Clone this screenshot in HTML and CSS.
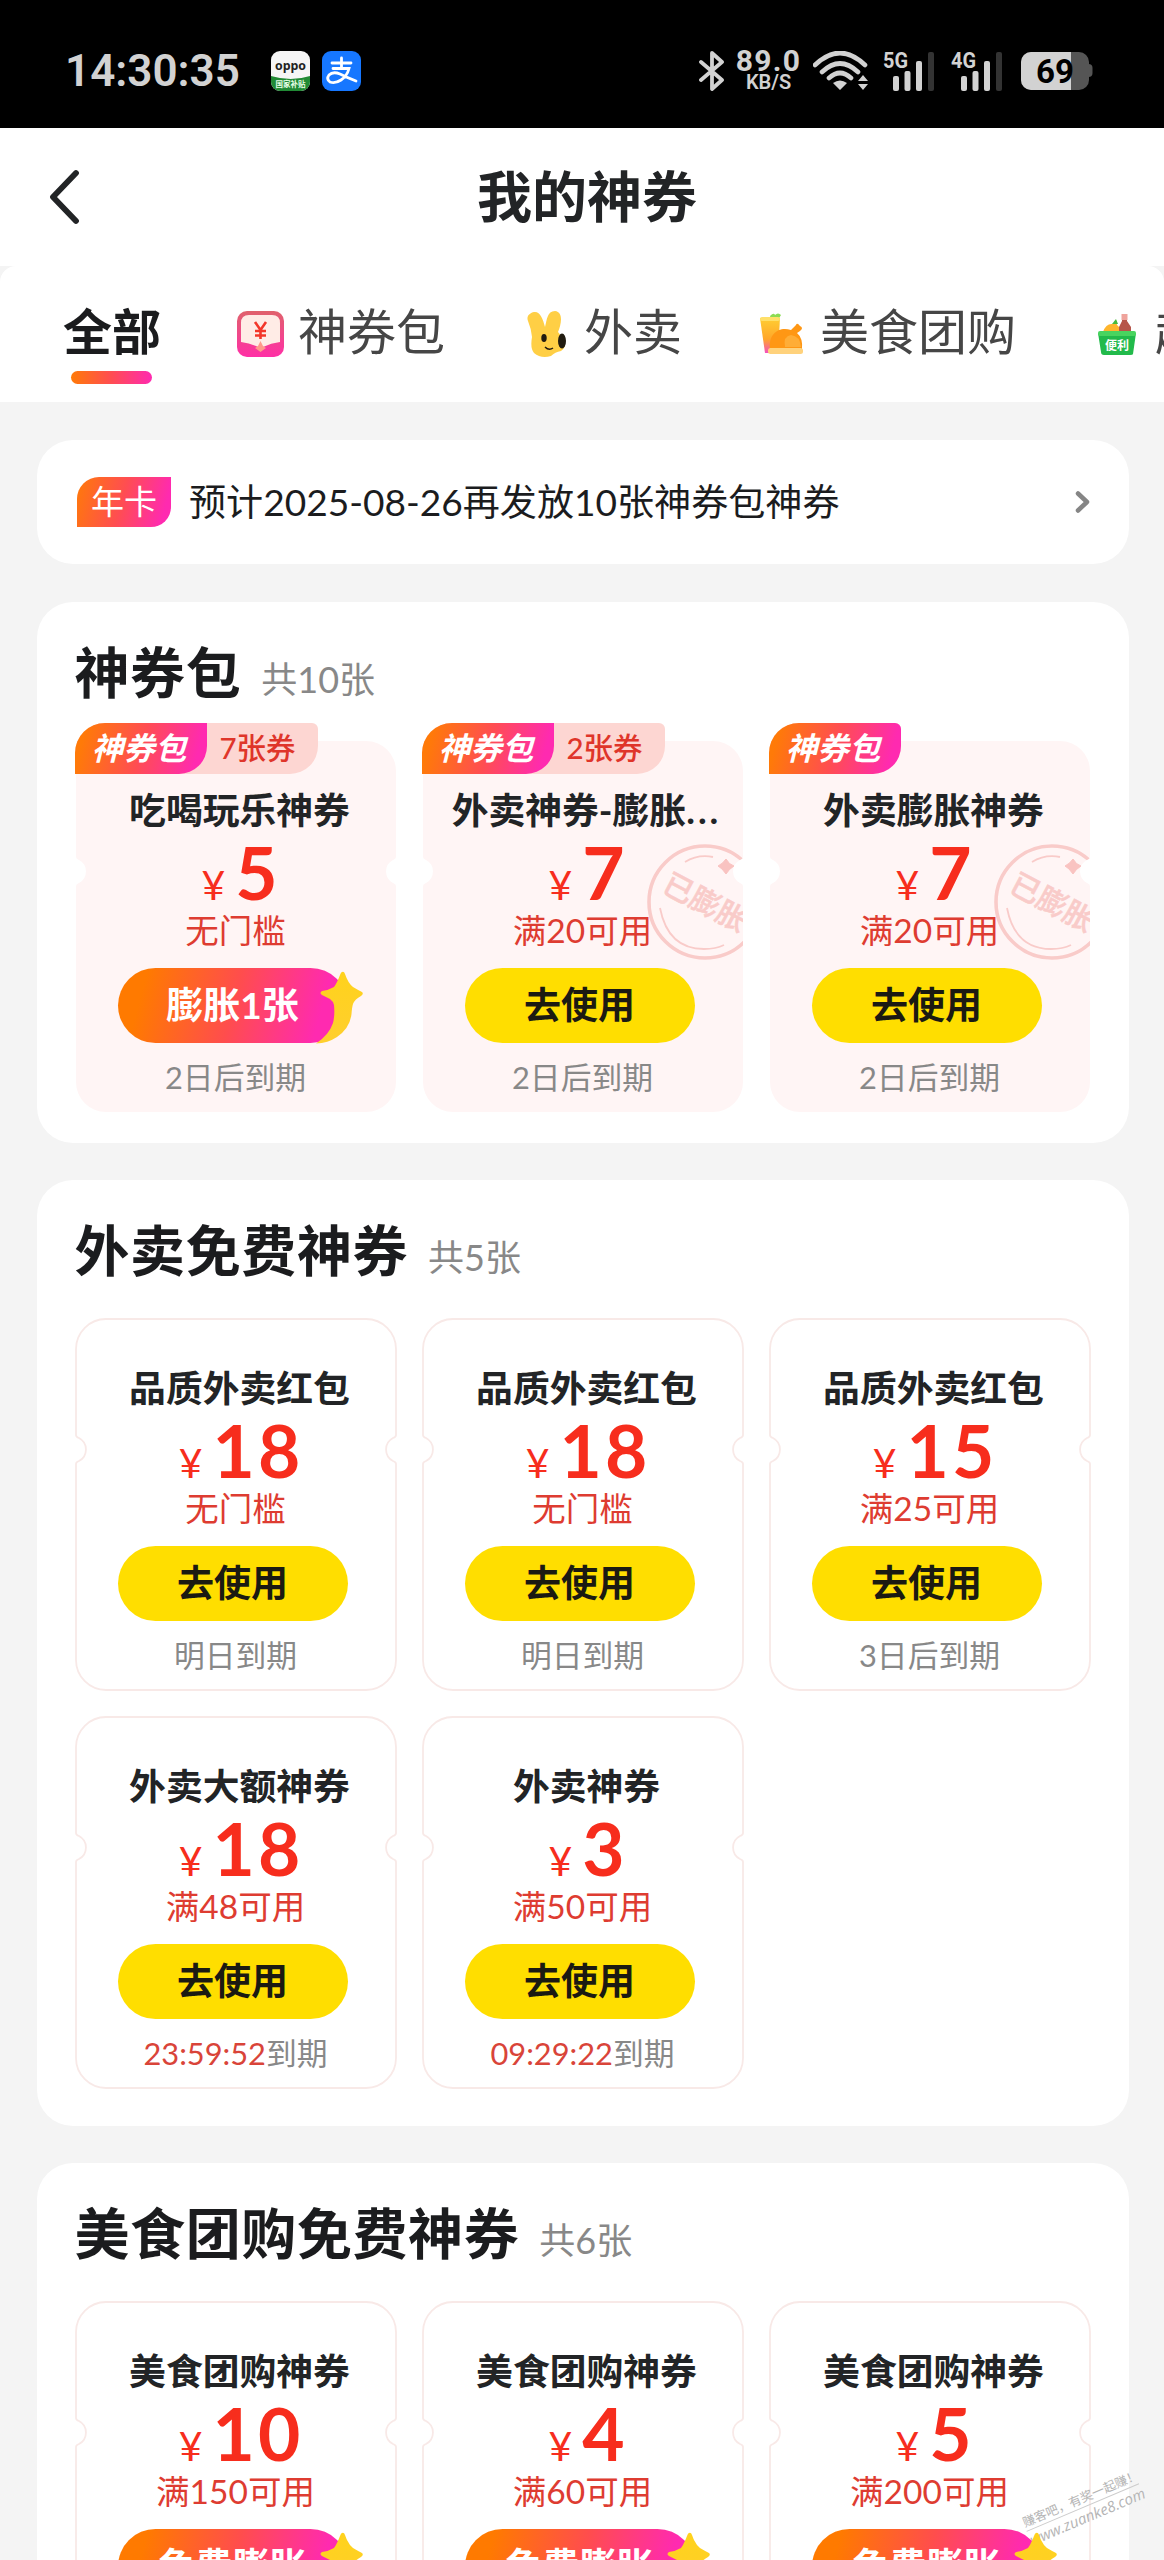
FILE: index.html
```
<!DOCTYPE html>
<html lang="zh-CN">
<head>
<meta charset="utf-8">
<title>我的神券</title>
<link rel="stylesheet" href="styles.css">
</head>
<body>
<svg class="defs" width="0" height="0" aria-hidden="true">
  <defs>
    <path id="ticket" d="M31 1H291A30 30 0 0 1 321 31V117Q321 119 318 120A13 13 0 0 0 318 143Q321 144 321 146V342A30 30 0 0 1 291 372H31A30 30 0 0 1 1 342V146Q1 144 4 143A13 13 0 0 0 4 120Q1 119 1 117V31A30 30 0 0 1 31 1Z"/>
    <clipPath id="ticket-clip"><use href="#ticket"/></clipPath>
    <linearGradient id="gold" x1="0" y1="0" x2="0" y2="1"><stop offset="0" stop-color="#ffd21c"/><stop offset="1" stop-color="#ffcf2e"/></linearGradient>
    <symbol id="outline" viewBox="0 0 322 373"><use href="#ticket" fill="#fff" stroke="#f8e9e7" stroke-width="1.8"/></symbol>
    <symbol id="filled" viewBox="0 0 322 373"><use href="#ticket" fill="#fff5f5"/></symbol>
    <symbol id="stamped" viewBox="0 0 322 373">
      <use href="#ticket" fill="#fff5f5"/>
      <g clip-path="url(#ticket-clip)" fill="none" stroke="#f9cbc9">
        <circle cx="283" cy="162" r="56" stroke-width="3.600"/>
        <path d="M263 122Q276 114 291 117M238 168Q246 209 282 209Q294 209 302 205" stroke-width="1.800"/>
        <path d="M304 119L307.500 123.500L312 126L307.500 129.500L304 134L300 129L296 126L300.500 123Z" fill="#f9c3c1" stroke="#f9c3c1" stroke-width="1"/>
        <text x="283" y="173" transform="rotate(28 283 163)" text-anchor="middle" class="stamp-text">已膨胀</text>
      </g>
    </symbol>
    <symbol id="star" viewBox="0 0 50 76">
      <path fill="url(#gold)" d="M26 4Q28 3 29 6Q32 15 37 19Q42 22 46 24Q48 26 45 28Q39 31 37 36Q36 39 35.500 46Q34 60 21 69Q12 75 0 75.500Q13 67 17 55Q19 47 18 37Q17 33 14 31L6 27Q3 25 6 23Q13 22 18 19Q21 15 24 7Q25 4 26 4Z"/>
    </symbol>
  </defs>
</svg>

<header class="status">
  <span class="clock">14:30:35</span>
  <svg class="app" viewBox="0 0 39 40"><defs><clipPath id="r"><rect width="39" height="40" rx="9"/></clipPath></defs><g clip-path="url(#r)"><rect width="39" height="40" fill="#f6f6f6"/><path d="M0 25Q20 31 39 25V40H0Z" fill="#218a35"/></g><text x="19.500" y="19" class="oppo" textLength="31" lengthAdjust="spacingAndGlyphs">oppo</text><text x="19.500" y="36" class="subsidy">国家补贴</text></svg>
  <svg class="app pay" viewBox="0 0 39 40"><rect width="39" height="40" rx="9" fill="#1677ff"/><g fill="none" stroke="#fff" stroke-width="2.800" stroke-linecap="round"><path d="M10 12H29M19.500 7V17M11 17.500H27Q25 25 19 29Q13 33 8 31Q4 28 7 24Q11 20 18 23Q26 27 34 30"/></g></svg>
  <div class="system">
    <svg class="bluetooth" viewBox="0 0 26 40"><path d="M2 11L23 29L13 38V2L23 11L2 29" fill="none" stroke="#d2d2d2" stroke-width="3.800" stroke-linejoin="round" stroke-linecap="round"/></svg>
    <div class="speed"><b>89.0</b><small>KB/S</small></div>
    <svg class="wifi" viewBox="0 0 55 40" fill="none" stroke="#d2d2d2" stroke-width="4.600"><path d="M2 14Q27 -10 52 14M9 21Q27 4 45 21M16 27Q27 17 38 27" stroke-linecap="round"/><path d="M27 39L20 32Q27 27 34 32ZM50 24L55 30H45ZM50 39L45 33H55Z" fill="#d2d2d2" stroke="none"/></svg>
    <svg class="signal" viewBox="0 0 52 40"><text x="0" y="17" class="net" textLength="25" lengthAdjust="spacingAndGlyphs">5G</text><g fill="#d2d2d2"><rect x="10" y="25" width="6" height="15" rx="2"/><rect x="21.500" y="20" width="6" height="20" rx="2"/><rect x="33" y="10" width="6" height="30" rx="2"/></g><rect x="45" y="1" width="6" height="39" rx="2" fill="#333"/></svg>
    <svg class="signal second" viewBox="0 0 52 40"><text x="0" y="17" class="net" textLength="25" lengthAdjust="spacingAndGlyphs">4G</text><g fill="#d2d2d2"><rect x="10" y="25" width="6" height="15" rx="2"/><rect x="21.500" y="20" width="6" height="20" rx="2"/><rect x="33" y="10" width="6" height="30" rx="2"/></g><rect x="45" y="1" width="6" height="39" rx="2" fill="#333"/></svg>
    <svg class="battery" viewBox="0 0 72 38"><rect x="62" y="12" width="9.500" height="13" rx="4" fill="#555"/><rect width="68" height="38" rx="10" fill="#555"/><path d="M10 0H50V38H10A10 10 0 0 1 0 28V10A10 10 0 0 1 10 0Z" fill="#d2d2d2"/><text x="34" y="31" class="level" textLength="38" lengthAdjust="spacingAndGlyphs">69</text></svg>
  </div>
</header>

<nav class="titlebar">
  <svg class="back" viewBox="0 0 32 56"><path d="M28 4L5 28L28 52" fill="none" stroke="#222426" stroke-width="5.800" stroke-linecap="round" stroke-linejoin="round"/></svg>
  <h1>我的神券</h1>
</nav>

<div class="tabs-wrap">
<div class="tabs">
  <div class="tab active"><span>全部</span></div>
  <div class="tab">
    <svg width="47" height="46" viewBox="0 0 47 46"><defs><linearGradient id="pk" x1="0" y1="0" x2="0" y2="1"><stop offset="0" stop-color="#e0626c"/><stop offset="1" stop-color="#ff2fa6"/></linearGradient></defs><rect width="47" height="46" rx="10" fill="url(#pk)"/><path d="M12 4H35Q43 4 43 12V31Q34 32 26 36Q23.500 38 21 36Q13 32 4 31V12Q4 4 12 4Z" fill="#ffece6"/><path d="M23.500 30L26 35L29 37L23.500 41L18 37L21 35Z" fill="#ff9a8a"/><path d="M18 11L23.500 19L29 11M23.500 19V28M18 20H29M18 24.500H29" stroke="#f3372a" stroke-width="2.600" fill="none"/></svg>
    <span>神券包</span>
  </div>
  <div class="tab rabbit">
    <svg width="41" height="48" viewBox="0 0 41 48"><path d="M7 2C13 1 16 9 18 17C20 10 20 1 28 1C37 2 34 15 31 22Q34 25 37 31Q40 37 34 41Q28 42 24 46Q14 49 7 43Q3 38 5 27Q4 18 1 11C-1 6 3 3 7 2Z" fill="#ffcf45"/><ellipse cx="17" cy="28" rx="2.700" ry="4" fill="#211b10"/><ellipse cx="35" cy="31" rx="4" ry="7.500" fill="#211b10"/><path d="M18 37Q22 41 26 38" stroke="#211b10" stroke-width="1.500" fill="none"/></svg>
    <span>外卖</span>
  </div>
  <div class="tab food">
    <svg width="46" height="42" viewBox="0 0 46 42"><defs><linearGradient id="juice" x1="0" y1="0" x2="0" y2="1"><stop offset="0" stop-color="#ffce32"/><stop offset=".6" stop-color="#ffa62a"/><stop offset="1" stop-color="#f44fc0"/></linearGradient></defs><path d="M10 3Q14 -1 15 2Q18 -1 21 2L18 7H11Z" fill="#8bdc52"/><path d="M0 5H20L18 40H5Z" fill="url(#juice)"/><rect x="0" y="4" width="20" height="4" rx="2" fill="#ffe06a"/><path d="M10 36C8 20 20 13 31 17L36 12Q37 9 40 13Q44 15 40 18L37 20Q43 25 42 36Z" fill="#ff9714"/><path d="M25 34Q23 23 31 22Q40 23 41 34Z" fill="#ffad36"/><rect x="8" y="35" width="35" height="6" rx="2.500" fill="#ffd27c"/></svg>
    <span>美食团购</span>
  </div>
  <div class="tab shop">
    <svg width="38" height="42" viewBox="0 0 38 42"><path d="M5 19Q8 10 15 11L18 7L19 12Q22 14 23 20Z" fill="#ffb52c"/><path d="M14 11L18 6L20 11Z" fill="#47ba3c"/><path d="M24 1H29V8L33 14V21H21V14L24 8Z" fill="#b6564a"/><rect x="23.500" y="1" width="6" height="6" fill="#efa39c"/><path d="M0 20H38L35 41Q35 42 32 42H6Q3 42 3 39Z" fill="#22ba4b"/><rect y="18" width="38" height="5" rx="2" fill="#49d45f"/><text x="19" y="37" class="basket">便利</text></svg>
    <span>超市</span>
  </div>
</div>
</div>

<main>
  <section class="notice">
    <span class="card-tag">年卡</span>
    <p>预计2025-08-26再发放10张神券包神券</p>
    <svg width="16" height="24" viewBox="0 0 16 24"><path d="M4 3.500L13 12L4 20.500" fill="none" stroke="#858585" stroke-width="4.500" stroke-linecap="round" stroke-linejoin="round"/></svg>
  </section>

  <section class="panel pack">
    <h2>神券包<small>共10张</small></h2>
    <div class="grid">
      <article class="coupon">
        <svg class="bg"><use href="#filled"/></svg>
        <div class="badge"><b>神券包</b><i>7张券</i></div>
        <h3>吃喝玩乐神券</h3><div class="price"><span>¥</span>5</div><p class="rule">无门槛</p>
        <div class="btn hot">膨胀1张<svg class="star"><use href="#star"/></svg></div><p class="expiry">2日后到期</p>
      </article>
      <article class="coupon">
        <svg class="bg"><use href="#stamped"/></svg>
        <div class="badge"><b>神券包</b><i>2张券</i></div>
        <h3>外卖神券-膨胀<span class="dots">...</span></h3><div class="price"><span>¥</span>7</div><p class="rule">满20可用</p>
        <div class="btn">去使用</div><p class="expiry">2日后到期</p>
      </article>
      <article class="coupon">
        <svg class="bg"><use href="#stamped"/></svg>
        <div class="badge solo"><b>神券包</b></div>
        <h3>外卖膨胀神券</h3><div class="price"><span>¥</span>7</div><p class="rule">满20可用</p>
        <div class="btn">去使用</div><p class="expiry">2日后到期</p>
      </article>
    </div>
  </section>

  <section class="panel">
    <h2>外卖免费神券<small>共5张</small></h2>
    <div class="grid">
      <article class="coupon">
        <svg class="bg"><use href="#outline"/></svg>
        <h3>品质外卖红包</h3><div class="price"><span>¥</span>18</div><p class="rule">无门槛</p>
        <div class="btn">去使用</div><p class="expiry">明日到期</p>
      </article>
      <article class="coupon">
        <svg class="bg"><use href="#outline"/></svg>
        <h3>品质外卖红包</h3><div class="price"><span>¥</span>18</div><p class="rule">无门槛</p>
        <div class="btn">去使用</div><p class="expiry">明日到期</p>
      </article>
      <article class="coupon">
        <svg class="bg"><use href="#outline"/></svg>
        <h3>品质外卖红包</h3><div class="price"><span>¥</span>15</div><p class="rule">满25可用</p>
        <div class="btn">去使用</div><p class="expiry">3日后到期</p>
      </article>
      <article class="coupon">
        <svg class="bg"><use href="#outline"/></svg>
        <h3>外卖大额神券</h3><div class="price"><span>¥</span>18</div><p class="rule">满48可用</p>
        <div class="btn">去使用</div><p class="expiry"><em>23:59:52</em>到期</p>
      </article>
      <article class="coupon">
        <svg class="bg"><use href="#outline"/></svg>
        <h3>外卖神券</h3><div class="price"><span>¥</span>3</div><p class="rule">满50可用</p>
        <div class="btn">去使用</div><p class="expiry"><em>09:29:22</em>到期</p>
      </article>
    </div>
  </section>

  <section class="panel">
    <h2>美食团购免费神券<small>共6张</small></h2>
    <div class="grid">
      <article class="coupon">
        <svg class="bg"><use href="#outline"/></svg>
        <h3>美食团购神券</h3><div class="price"><span>¥</span>10</div><p class="rule">满150可用</p>
        <div class="btn hot">免费膨胀<svg class="star"><use href="#star"/></svg></div>
      </article>
      <article class="coupon">
        <svg class="bg"><use href="#outline"/></svg>
        <h3>美食团购神券</h3><div class="price"><span>¥</span>4</div><p class="rule">满60可用</p>
        <div class="btn hot">免费膨胀<svg class="star"><use href="#star"/></svg></div>
      </article>
      <article class="coupon">
        <svg class="bg"><use href="#outline"/></svg>
        <h3>美食团购神券</h3><div class="price"><span>¥</span>5</div><p class="rule">满200可用</p>
        <div class="btn hot">免费膨胀<svg class="star"><use href="#star"/></svg></div>
      </article>
    </div>
  </section>
</main>
<div class="watermark"><span>赚客吧，有奖一起赚！</span><span class="site">www.zuanke8.com</span></div>
</body>
</html>
```
FILE: styles.css
```
* { box-sizing: border-box; margin: 0; padding: 0; }

body {
  position: relative;
  width: 1164px;
  height: 2560px;
  overflow: hidden;
  background: #f4f4f4;
  color: #1b1c1e;
  font-family: Lato, "Noto Sans CJK SC", sans-serif;
}

svg { display: block; flex: none; }
.defs { position: absolute; }

/* status bar */
.status {
  display: flex;
  align-items: center;
  height: 128px;
  padding: 13px 71px 0 65px;
  background: #000;
  color: #d2d2d2;
}
.clock { width: 206px; font: 600 44px/50px Roboto, sans-serif; white-space: nowrap; }
.app { width: 39px; height: 40px; }
.pay { margin-left: 12px; }
.oppo { font: 700 13px "Open Sans", sans-serif; text-anchor: middle; fill: #222; }
.subsidy { font: 700 7.5px "Noto Sans CJK SC", sans-serif; text-anchor: middle; fill: #e8ffe8; }
.system { display: flex; align-items: center; margin-left: auto; }
.bluetooth { width: 26px; height: 40px; }
.speed {
  display: flex;
  flex-direction: column;
  align-items: center;
  width: 65px;
  height: 42px;
  margin: 0 12px 0 11px;
  font-family: Roboto, sans-serif;
}
.speed b { font-size: 30px; font-weight: 700; line-height: 22px; letter-spacing: 1.3px; }
.speed small { font-size: 20px; font-weight: 600; line-height: 21px; }
.wifi { width: 55px; height: 40px; }
.signal { width: 52px; height: 40px; margin-left: 15px; }
.second { margin-left: 16px; }
.net { font: 700 22px Roboto, sans-serif; fill: #d2d2d2; }
.battery { width: 72px; height: 38px; margin-left: 18px; }
.level { font: 700 33px Roboto, sans-serif; text-anchor: middle; fill: #000; }

/* title bar */
.titlebar {
  display: grid;
  grid-template-columns: 1fr auto 1fr;
  align-items: center;
  height: 138px;
  padding: 0 47px 0 48px;
  background: #fff;
}
.back { width: 32px; height: 56px; }
h1 { margin: 0 0 2px 9px; font-size: 55px; line-height: 66px; color: #222426; }

/* category tabs */
.tabs-wrap { background: #f4f4f4; }
.tabs {
  display: flex;
  height: 136px;
  padding: 0 0 0 63px;
  overflow: hidden;
  background: #fff;
  border-radius: 16px 16px 0 0;
}
.tab {
  display: flex;
  flex: none;
  align-items: center;
  gap: 14px;
  height: 136px;
  margin-right: 82px;
  font-size: 49px;
  line-height: 60px;
  color: #464646;
  white-space: nowrap;
}
.tab span { padding-bottom: 7px; }
.active {
  position: relative;
  margin-right: 76px;
  font-weight: 700;
  color: #1b1c1e;
}
.active::after {
  content: "";
  position: absolute;
  left: 8px;
  top: 105px;
  width: 81px;
  height: 13px;
  border-radius: 7px;
  background: linear-gradient(90deg, #ff7a08, #ff4d52 50%, #ff2ab0);
}
.rabbit { gap: 16px; margin-right: 78px; }
.food { margin-right: 82px; }
.shop { gap: 19px; }
.basket { font: 700 12px "Noto Sans CJK SC", sans-serif; text-anchor: middle; fill: #fff; }

main {
  display: flex;
  flex-direction: column;
  gap: 38px;
  height: 2158px;
  padding: 38px 35px 0 37px;
  overflow: hidden;
}
main > * { flex: none; }

/* annual card notice */
.notice {
  display: flex;
  align-items: center;
  height: 124px;
  padding: 0 39px 0 40px;
  background: #fff;
  border-radius: 36px;
}
.card-tag {
  width: 94px;
  height: 50px;
  border-radius: 22px 0 20px 0;
  background: linear-gradient(105deg, #ff7a08, #ff4d52 48%, #ff2ab0 90%);
  color: #fff;
  font-size: 33px;
  line-height: 48px;
  text-align: center;
}
.notice p { flex: 1; margin-left: 18px; font-size: 37.1px; line-height: 48px; white-space: nowrap; }

/* coupon panels */
.panel { margin-bottom: -1px; padding: 0 0 37px 37.5px; background: #fff; border-radius: 36px; }
.pack { padding-bottom: 30px; }
h2 {
  display: flex;
  align-items: baseline;
  gap: 20px;
  height: 138px;
  padding-top: 37px;
  font-size: 55px;
  line-height: 66px;
  letter-spacing: .6px;
}
h2 small { font-size: 36px; font-weight: 400; letter-spacing: 0; color: #888; }
.grid { display: grid; grid-template-columns: repeat(3, 322px); gap: 25px; }

.coupon {
  position: relative;
  display: flex;
  flex-direction: column;
  align-items: center;
  height: 373px;
  padding-top: 48px;
  white-space: nowrap;
}
.bg { position: absolute; inset: 0; width: 322px; height: 373px; }
.coupon > * { z-index: 1; }
.coupon > .bg { z-index: 0; }
.stamp-text { font: 500 30px "Noto Sans CJK SC", sans-serif; fill: #f9cbc9; stroke: #f9cbc9; stroke-width: .5px; }

.badge {
  position: absolute;
  left: 0;
  top: -17px;
  display: flex;
  height: 51px;
  border-radius: 30px 6px 28px 0;
  background: #fdd6d2;
  line-height: 50px;
}
.badge b {
  width: 132px;
  padding-right: 3px;
  border-radius: 30px 0 28px 0;
  background: linear-gradient(105deg, #ff7a08 8%, #ff4d52 50%, #ff2ab0 90%);
  color: #fff;
  font-size: 31.5px;
  font-style: italic;
  text-align: center;
}
.solo b { border-radius: 30px 6px 28px 0; }
.badge i { width: 111px; padding-left: 13px; font-size: 29.5px; font-style: normal; font-weight: 500; color: #df352a; }

h3 { margin-left: 8px; font-size: 36.8px; line-height: 44px; color: #222426; }
.dots { letter-spacing: 3px; }
.price {
  display: flex;
  align-items: baseline;
  height: 76px;
  margin-left: 11px;
  padding-top: 2px;
  font-size: 73px;
  font-weight: 700;
  line-height: 76px;
  letter-spacing: 3px;
  color: #f72d1d;
}
.price span { margin-right: 7px; font-size: 41px; font-weight: 400; }
.rule { font-size: 33.5px; line-height: 45px; color: #de3c31; }
.btn {
  position: relative;
  width: 230px;
  height: 75px;
  margin: 15px 6px 0 0;
  border-radius: 38px;
  background: #ffde00;
  color: #1b1a12;
  font-size: 37px;
  font-weight: 700;
  line-height: 74px;
  text-align: center;
}
.hot { background: linear-gradient(105deg, #ff7a00 12%, #ff4d4d 50%, #ff2ab0 86%); color: #fff; }
.star { position: absolute; left: 198px; top: 0; width: 50px; height: 76px; }
.expiry { margin-top: 17px; font-size: 30.8px; line-height: 36px; color: #888; }
.expiry em { font-style: normal; color: #d94439; }

.watermark {
  position: absolute;
  left: 1022px;
  top: 2490px;
  display: flex;
  flex-direction: column;
  width: 122px;
  transform: rotate(-23deg);
  color: #b4b4b4;
  font-size: 12.5px;
  line-height: 17px;
  white-space: nowrap;
}
.site { border-top: 1px solid #ccc; font: italic 15px/18px "Open Sans", sans-serif; }
```
